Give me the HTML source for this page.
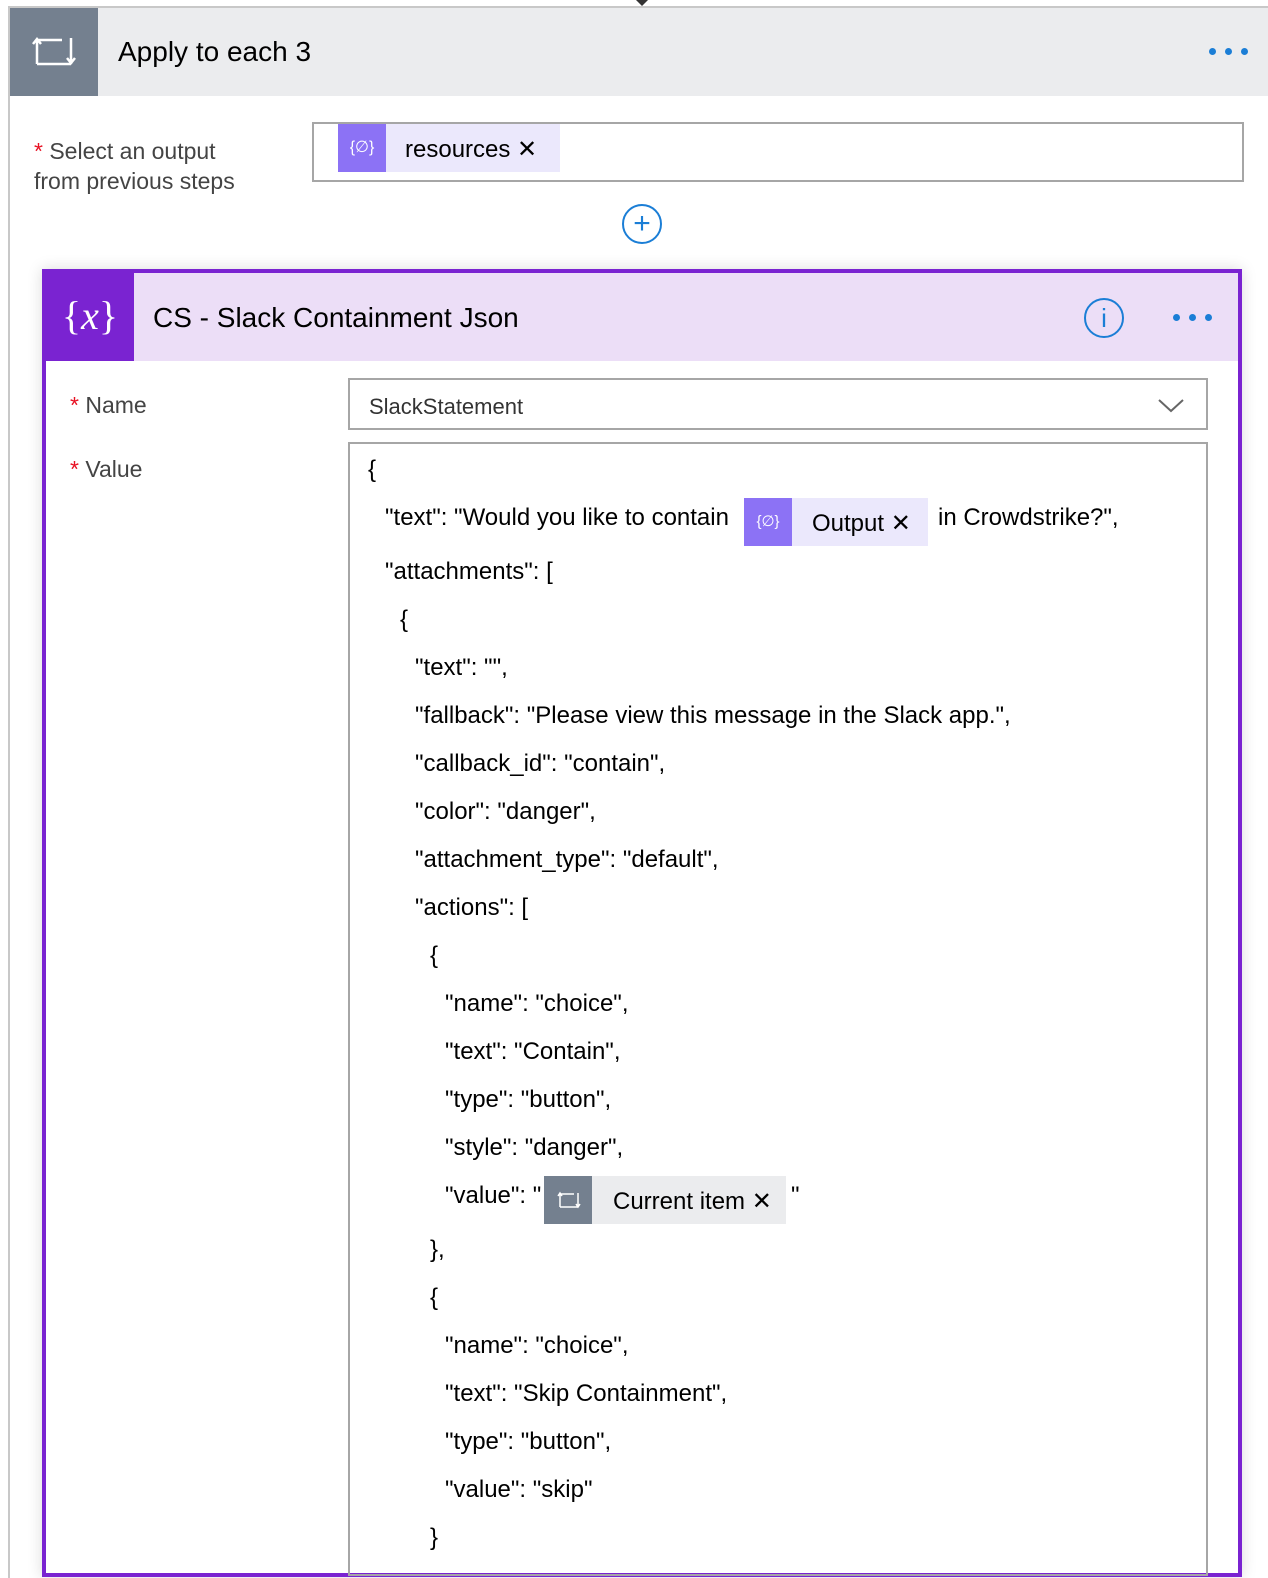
<!DOCTYPE html>
<html><head><meta charset="utf-8"><style>
body{margin:0;width:1268px;height:1564px;background:#fff;position:relative;overflow:hidden;font-family:"Liberation Sans",sans-serif;color:#000}
.a{position:absolute;white-space:nowrap}
.l{position:absolute;white-space:nowrap;font-size:24px;line-height:28px}
</style></head><body>
<div class="a" style="left:8px;top:6px;width:1262px;height:1570px;border-left:2px solid #c8c8c8;border-top:2px solid #c8c8c8"></div>
<div class="a" style="left:10px;top:8px;width:88px;height:88px;background:#74808f"></div>
<svg class="a" style="left:32px;top:34px" width="44" height="34" viewBox="0 0 44 34" fill="none" stroke="#fff" stroke-width="2.5"><path d="M5 30V6M1 10l4-5 4 5M5 6h25M5 30h34M39 30V4M35 24l4 5 4-5" /></svg>
<div class="a" style="left:98px;top:8px;width:1170px;height:88px;background:#ebecee"></div>
<div class="a" style="left:118px;top:36px;font-size:28px">Apply to each 3</div>
<div class="a" style="left:1209px;top:48px;width:7px;height:7px;border-radius:50%;background:#1b7ed6"></div>
<div class="a" style="left:1225px;top:48px;width:7px;height:7px;border-radius:50%;background:#1b7ed6"></div>
<div class="a" style="left:1241px;top:48px;width:7px;height:7px;border-radius:50%;background:#1b7ed6"></div>
<div class="a" style="left:34px;top:136px;font-size:23px;color:#444;line-height:30px"><span style="color:#e81123">*</span> Select an output<br>from previous steps</div>
<div class="a" style="left:312px;top:122px;width:928px;height:56px;border:2px solid #a6a6a6"></div>
<div class="a" style="left:338px;top:124px;width:48px;height:48px;background:#8c72f5;color:#fff;font-size:16px;text-align:center;line-height:48px">{∅}</div>
<div class="a" style="left:386px;top:124px;width:174px;height:48px;background:#ebe8fc;font-size:24px;line-height:52px;padding-left:19px;box-sizing:border-box">resources ✕</div>
<div class="a" style="left:622px;top:204px;width:36px;height:36px;border:2px solid #1b7ed6;border-radius:50%;color:#1b7ed6;text-align:center;line-height:36px;font-size:30px">+</div>
<div class="a" style="left:42px;top:269px;width:1192px;height:1300px;border:4px solid #7a23d1;box-shadow:0 0 14px rgba(0,0,0,.15)"></div>
<div class="a" style="left:46px;top:273px;width:88px;height:88px;background:#7a23d1;color:#fff;font-size:40px;text-align:center;line-height:86px;font-family:'Liberation Serif',serif">{<i>x</i>}</div>
<div class="a" style="left:134px;top:273px;width:1104px;height:88px;background:#ecdef7"></div>
<div class="a" style="left:153px;top:302px;font-size:28px">CS - Slack Containment Json</div>
<div class="a" style="left:1084px;top:298px;width:36px;height:36px;border:2px solid #1b7ed6;border-radius:50%;color:#1b7ed6;text-align:center;line-height:36px;font-size:26px">i</div>
<div class="a" style="left:1173px;top:314px;width:7px;height:7px;border-radius:50%;background:#1b7ed6"></div>
<div class="a" style="left:1189px;top:314px;width:7px;height:7px;border-radius:50%;background:#1b7ed6"></div>
<div class="a" style="left:1205px;top:314px;width:7px;height:7px;border-radius:50%;background:#1b7ed6"></div>
<div class="a" style="left:70px;top:392px;font-size:23px;color:#444"><span style="color:#e81123">*</span> Name</div>
<div class="a" style="left:70px;top:456px;font-size:23px;color:#444"><span style="color:#e81123">*</span> Value</div>
<div class="a" style="left:348px;top:378px;width:856px;height:48px;border:2px solid #a6a6a6"></div>
<div class="a" style="left:369px;top:394px;font-size:22px;color:#333">SlackStatement</div>
<svg class="a" style="left:1158px;top:398px" width="26" height="16"><path d="M1 2l12 11 12-11" fill="none" stroke="#666" stroke-width="2"/></svg>
<div class="a" style="left:348px;top:442px;width:856px;height:1130px;border:2px solid #a6a6a6"></div>
<div class="l" style="left:368px;top:456px">{</div>
<div class="l" style="left:385px;top:504px">"text": "Would you like to contain</div>
<div class="a" style="left:744px;top:498px;width:48px;height:48px;background:#8c72f5;color:#fff;font-size:15px;text-align:center;line-height:48px">{∅}</div>
<div class="a" style="left:792px;top:498px;width:136px;height:48px;background:#ebe8fc;font-size:24px;line-height:52px;padding-left:20px;box-sizing:border-box">Output ✕</div>
<div class="l" style="left:938px;top:504px">in Crowdstrike?",</div>
<div class="l" style="left:385px;top:558px">"attachments": [</div>
<div class="l" style="left:400px;top:606px">{</div>
<div class="l" style="left:415px;top:654px">"text": "",</div>
<div class="l" style="left:415px;top:702px">"fallback": "Please view this message in the Slack app.",</div>
<div class="l" style="left:415px;top:750px">"callback_id": "contain",</div>
<div class="l" style="left:415px;top:798px">"color": "danger",</div>
<div class="l" style="left:415px;top:846px">"attachment_type": "default",</div>
<div class="l" style="left:415px;top:894px">"actions": [</div>
<div class="l" style="left:430px;top:942px">{</div>
<div class="l" style="left:445px;top:990px">"name": "choice",</div>
<div class="l" style="left:445px;top:1038px">"text": "Contain",</div>
<div class="l" style="left:445px;top:1086px">"type": "button",</div>
<div class="l" style="left:445px;top:1134px">"style": "danger",</div>
<div class="l" style="left:445px;top:1182px">"value": "</div>
<div class="a" style="left:544px;top:1176px;width:48px;height:48px;background:#74808f"></div>
<svg class="a" style="left:557px;top:1191px" width="24" height="18" viewBox="0 0 24 18" fill="none" stroke="#fff" stroke-width="1.5"><path d="M3 16V3M1 5l2-3 2 3M3 3h14M3 16h18M21 16V2M19 13l2 3 2-3"/></svg>
<div class="a" style="left:592px;top:1176px;width:194px;height:48px;background:#ebecee;font-size:24px;line-height:52px;padding-left:21px;box-sizing:border-box">Current item ✕</div>
<div class="l" style="left:791px;top:1182px">"</div>
<div class="l" style="left:430px;top:1236px">},</div>
<div class="l" style="left:430px;top:1284px">{</div>
<div class="l" style="left:445px;top:1332px">"name": "choice",</div>
<div class="l" style="left:445px;top:1380px">"text": "Skip Containment",</div>
<div class="l" style="left:445px;top:1428px">"type": "button",</div>
<div class="l" style="left:445px;top:1476px">"value": "skip"</div>
<div class="l" style="left:430px;top:1524px">}</div>
<div class="a" style="left:636px;top:0;width:0;height:0;border-left:6px solid transparent;border-right:6px solid transparent;border-top:6px solid #333"></div>
</body></html>
